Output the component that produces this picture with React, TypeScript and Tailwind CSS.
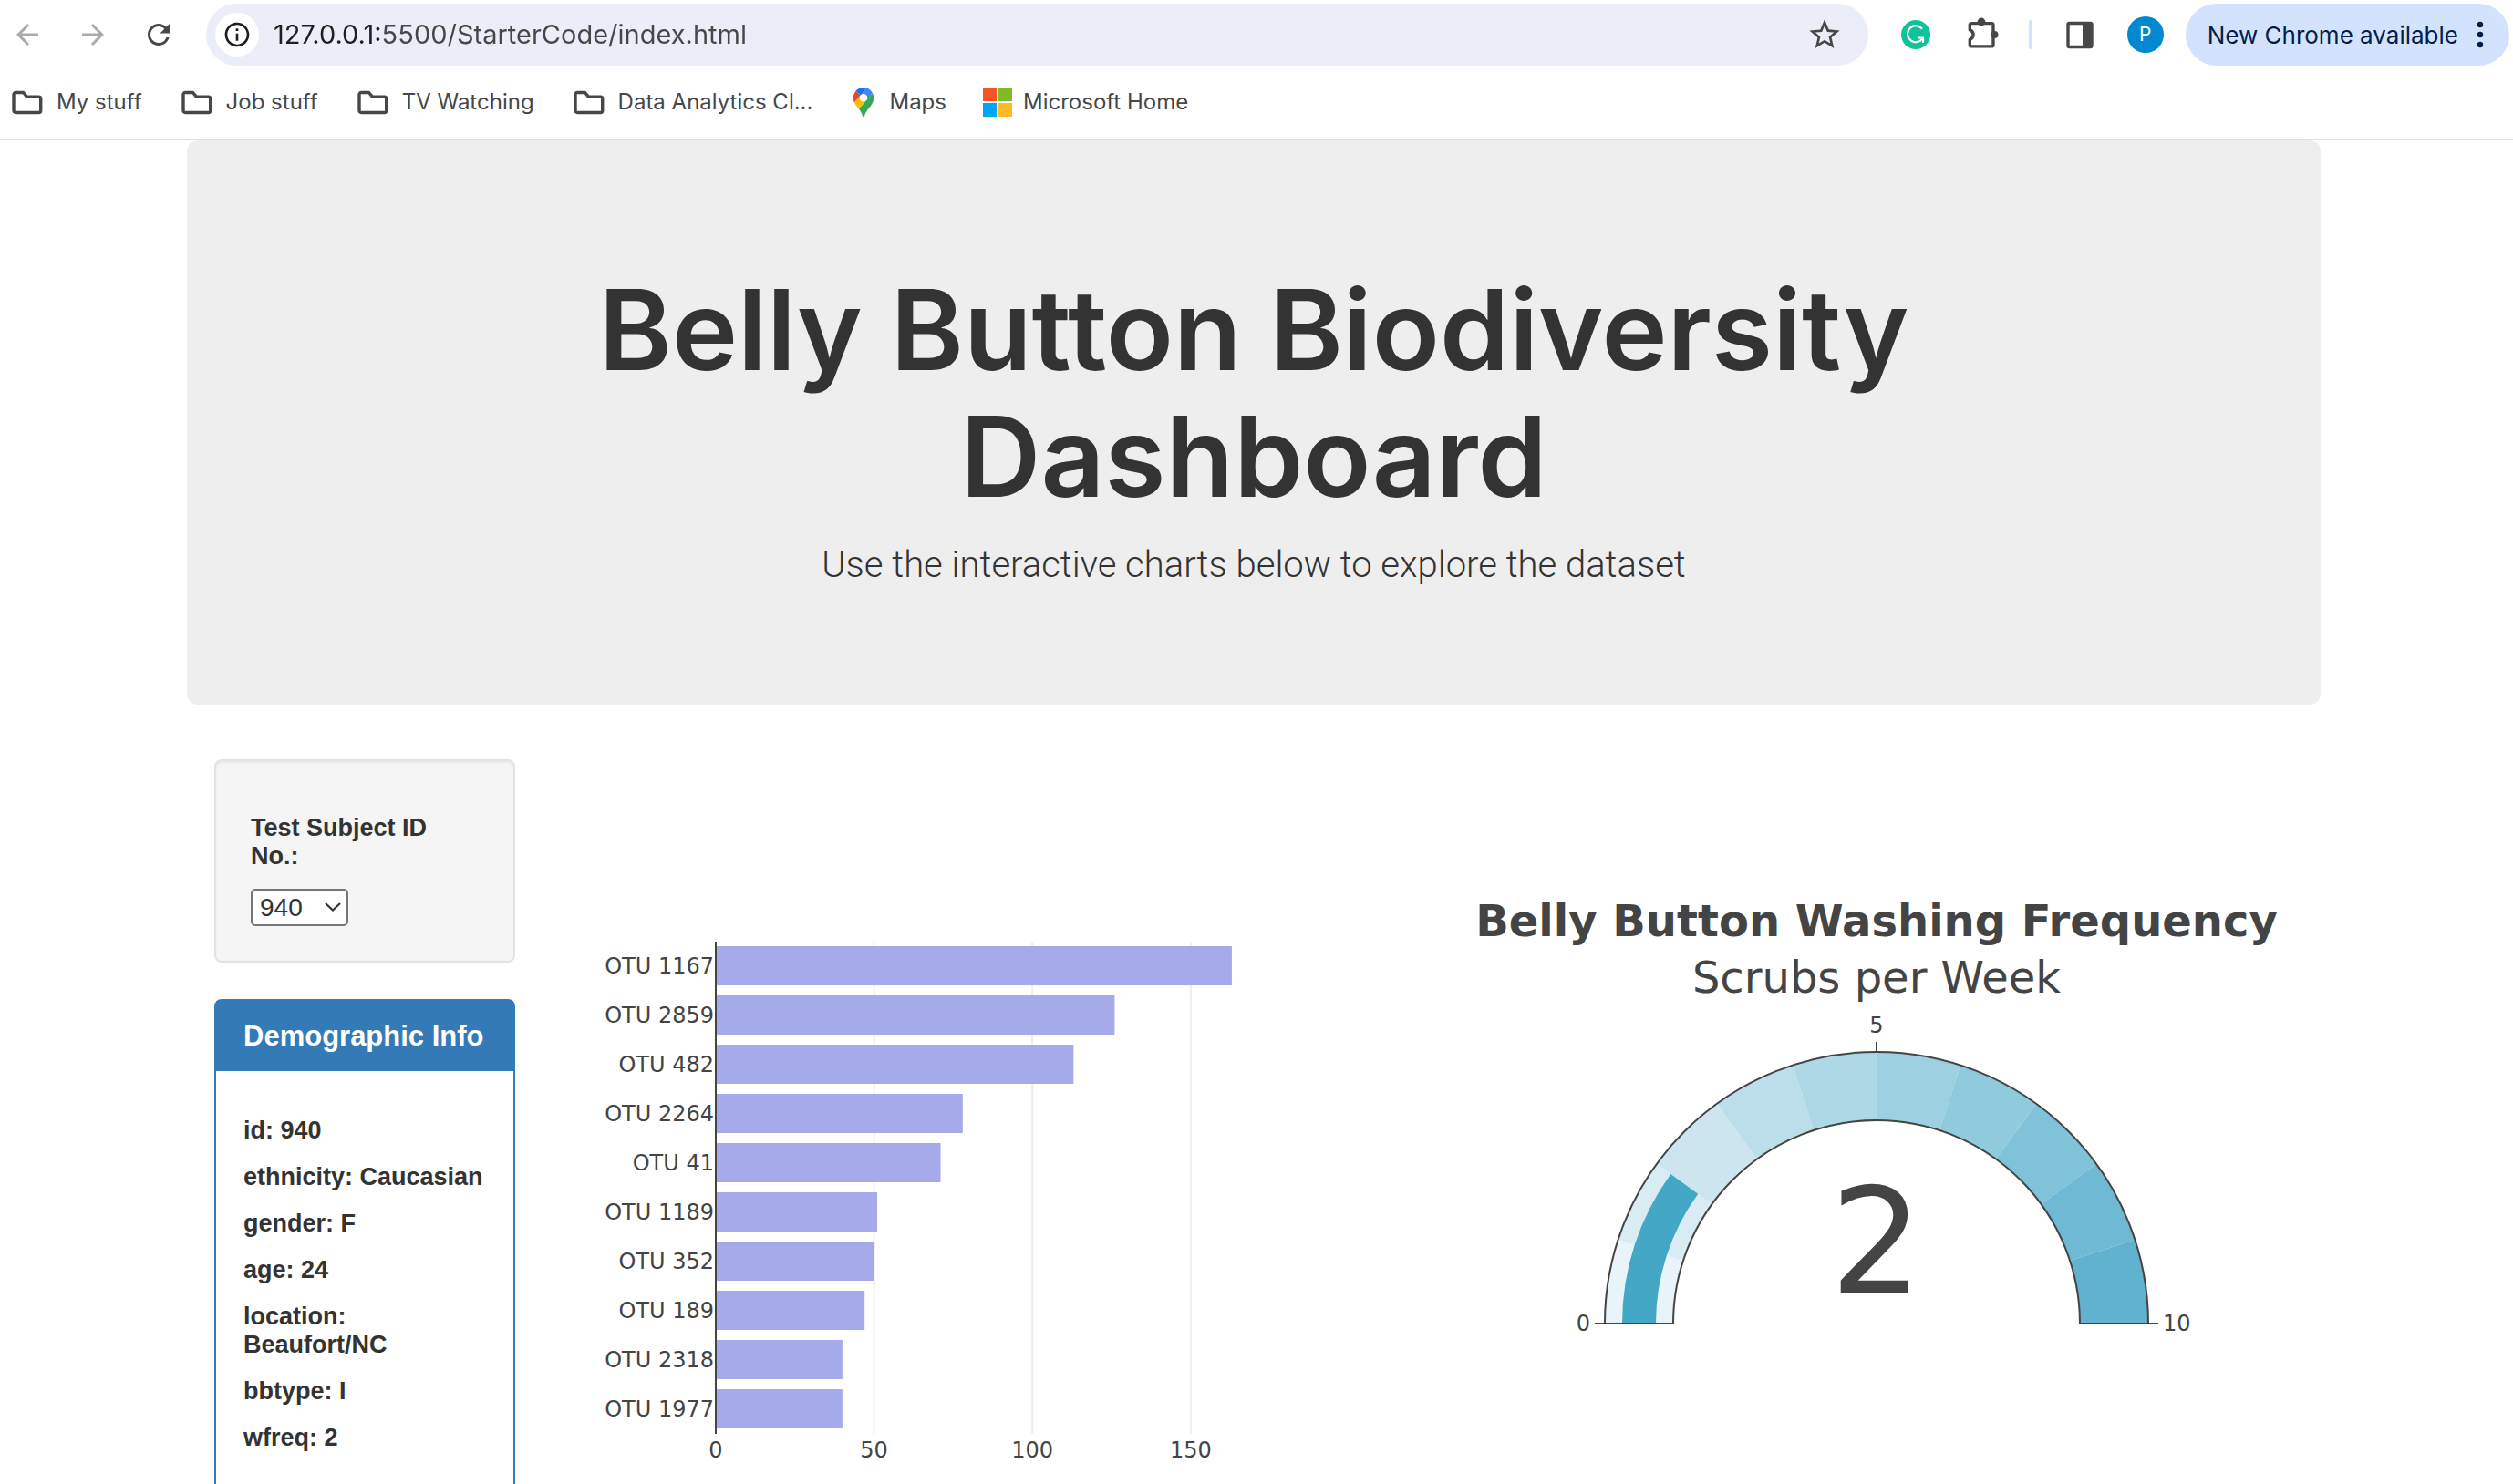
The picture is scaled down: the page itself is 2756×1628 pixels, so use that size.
import { useState } from "react";
import type { ReactNode } from "react";
import { MdArrowBack, MdArrowForward, MdInfoOutline, MdRefresh, MdStarBorder } from "react-icons/md";

const HOST_GRADIENT =
  "bg-[linear-gradient(to_right,#1f1f1f_121px,#474747_121px)] bg-clip-text text-transparent caret-black";

function FolderIcon() {
  return (
    <svg width="40" height="32" viewBox="0 0 40 32" fill="none" aria-hidden="true">
      <path
        d="M7.200 5.500h8.400l4 4.800H32.500a2.200 2.200 0 0 1 2.200 2.200v12.800a2.200 2.200 0 0 1-2.200 2.200H7.200A2.200 2.200 0 0 1 5 25.300V7.700A2.200 2.200 0 0 1 7.200 5.500z"
        stroke="#474747"
        strokeWidth="3.400"
        strokeLinejoin="round"
      />
    </svg>
  );
}

function MapsIcon() {
  return (
    <svg width="32" height="32" viewBox="-20 0 132.300 132.300" aria-hidden="true">
      <path fill="#1a73e8" d="M60.2 2.2C55.8.8 51 0 46.1 0 32 0 19.3 6.4 10.8 16.5l21.8 18.3L60.2 2.2z" />
      <path fill="#ea4335" d="M10.8 16.5C4.1 24.5 0 34.9 0 46.1c0 8.7 1.7 15.7 4.6 22l28-33.3-21.8-18.3z" />
      <path
        fill="#4285f4"
        d="M46.2 28.5c9.8 0 17.7 7.9 17.7 17.7 0 4.3-1.6 8.3-4.2 11.4 0 0 13.9-16.6 27.500-32.7-5.6-10.8-15.3-19-27-22.7L32.6 34.8c3.3-3.8 8.1-6.3 13.6-6.3"
      />
      <path
        fill="#fbbc04"
        d="M46.2 63.8c-9.8 0-17.7-7.9-17.7-17.7 0-4.3 1.500-8.3 4.1-11.3l-28 33.3c4.8 10.6 12.8 19.2 21 29.9l34.1-40.5c-3.3 3.9-8.1 6.3-13.5 6.3"
      />
      <path
        fill="#34a853"
        d="M59.1 109.2c15.4-24.1 33.3-35 33.3-63 0-7.7-1.9-14.9-5.2-21.3L25.6 98c2.6 3.4 5.3 7.3 7.9 11.3 9.4 14.5 6.8 23.1 12.8 23.1s3.4-8.7 12.8-23.2"
      />
    </svg>
  );
}

function MicrosoftIcon() {
  return (
    <svg width="32" height="32" viewBox="0 0 32 32" aria-hidden="true">
      <rect width="15" height="15" fill="#f65326" />
      <rect x="17" width="15" height="15" fill="#81bb24" />
      <rect y="17" width="15" height="15" fill="#00a6f0" />
      <rect x="17" y="17" width="15" height="15" fill="#ffba25" />
    </svg>
  );
}

function GrammarlyIcon() {
  return (
    <svg width="32" height="32" viewBox="0 0 32 32" fill="none" aria-hidden="true">
      <circle cx="16" cy="16" r="16" fill="#11c39a" />
      <path d="M23 9.600A9 9 0 1 0 21 22.700L24 19.800" stroke="#fff" strokeWidth="2.200" />
      <path d="M18.200 19.500H24V25" stroke="#fff" strokeWidth="2.200" />
    </svg>
  );
}

function PuzzleIcon() {
  return (
    <svg width="40" height="40" viewBox="0 0 40 40" aria-hidden="true">
      <path
        d="M7 7.600H29.300A1.700 1.700 0 0 1 31 9.300V31.200A1.700 1.700 0 0 1 29.300 32.900H7A1.700 1.700 0 0 1 5.300 31.200V25.400A5.600 5.600 0 0 0 5.300 14.800V9.300A1.700 1.700 0 0 1 7 7.600z"
        fill="none"
        stroke="#474747"
        strokeWidth="3.400"
        strokeLinejoin="round"
      />
      <circle cx="18" cy="6" r="4.400" fill="#474747" />
      <circle cx="32.500" cy="20" r="4" fill="#474747" />
    </svg>
  );
}

function SidePanelIcon() {
  return (
    <svg width="32" height="32" viewBox="0 0 32 32" aria-hidden="true">
      <rect x="3" y="3.500" width="26" height="26" rx="1.500" fill="#fff" stroke="#474747" strokeWidth="3.400" />
      <rect x="19" y="3" width="10" height="27" fill="#474747" />
    </svg>
  );
}

function Bookmark({ icon, children }: { icon: ReactNode; children: ReactNode }) {
  return (
    <a href="#" className="flex items-center gap-3 text-2xl text-[#474747]">
      {icon}
      {children}
    </a>
  );
}

function BrowserBar() {
  return (
    <header className="shrink-0 border-b-2 border-[#e0e0e0] bg-white font-[Inter,sans-serif]">
      <div className="flex items-center pt-1 pr-1 pl-3">
        <nav className="mr-[34px] flex items-center gap-9 text-4xl">
          <button aria-label="Back" className="text-[#ababab]"><MdArrowBack /></button>
          <button aria-label="Forward" className="text-[#ababab]"><MdArrowForward /></button>
          <button aria-label="Reload" className="text-[#474747]"><MdRefresh /></button>
        </nav>
        <div className="flex h-[68px] flex-1 items-center gap-4 rounded-full bg-[#ebeef8] pr-7 pl-2.5">
          <button aria-label="Site information" className="flex size-12 items-center justify-center rounded-full bg-white text-[#1f1f1f]">
            <MdInfoOutline className="size-8" />
          </button>
          <input
            aria-label="Address"
            defaultValue="127.0.0.1:5500/StarterCode/index.html"
            className={`min-w-0 flex-1 text-[29px] outline-none ${HOST_GRADIENT}`}
          />
          <button aria-label="Bookmark this page" className="text-[#474747]">
            <MdStarBorder className="size-10" />
          </button>
        </div>
        <button aria-label="Grammarly" className="ml-9"><GrammarlyIcon /></button>
        <button aria-label="Extensions" className="ml-[38px]"><PuzzleIcon /></button>
        <span className="ml-[30px] h-8 w-1 rounded-full bg-[#d3e3fd]" />
        <button aria-label="Side panel" className="ml-9"><SidePanelIcon /></button>
        <button aria-label="Profile" className="ml-9 flex size-10 items-center justify-center rounded-full bg-[#0288d1] text-[21px] text-white">
          P
        </button>
        <button className="ml-6 flex h-[68px] items-center gap-5 rounded-full bg-[#d3e3fd] pr-7 pl-6 text-[26px] text-[#041e49]">
          New Chrome available
          <svg width="8" height="30" viewBox="0 0 8 30" fill="#041e49" aria-hidden="true">
            <circle cx="4" cy="4" r="3.200" />
            <circle cx="4" cy="15" r="3.200" />
            <circle cx="4" cy="26" r="3.200" />
          </svg>
        </button>
      </div>
      <nav className="flex h-20 items-center gap-10 pl-2.5">
        <Bookmark icon={<FolderIcon />}>My stuff</Bookmark>
        <Bookmark icon={<FolderIcon />}>Job stuff</Bookmark>
        <Bookmark icon={<FolderIcon />}>TV Watching</Bookmark>
        <Bookmark icon={<FolderIcon />}>Data Analytics Cl...</Bookmark>
        <Bookmark icon={<MapsIcon />}>Maps</Bookmark>
        <Bookmark icon={<MicrosoftIcon />}>Microsoft Home</Bookmark>
      </nav>
    </header>
  );
}

const SAMPLES = [
  { label: "OTU 1167", value: 163 },
  { label: "OTU 2859", value: 126 },
  { label: "OTU 482", value: 113 },
  { label: "OTU 2264", value: 78 },
  { label: "OTU 41", value: 71 },
  { label: "OTU 1189", value: 51 },
  { label: "OTU 352", value: 50 },
  { label: "OTU 189", value: 47 },
  { label: "OTU 2318", value: 40 },
  { label: "OTU 1977", value: 40 },
];

function BarChart() {
  const left = 160;
  const top = 200;
  const rowHeight = 54;
  const bottom = top + rowHeight * SAMPLES.length;
  const x = (value: number) => left + value * 3.472;
  return (
    <svg viewBox="0 0 915 900" className="w-full" fill="#444" fontFamily='"DejaVu Sans", Verdana, sans-serif' fontSize="24" role="img" aria-label="Top ten OTUs">
      {[50, 100, 150].map((tick) => (
        <line key={tick} x1={x(tick)} x2={x(tick)} y1={top} y2={bottom} stroke="#eee" strokeWidth="2" />
      ))}
      <line x1={left} x2={left} y1={top} y2={bottom} stroke="#444" strokeWidth="2" />
      {SAMPLES.map((sample, i) => (
        <g key={sample.label}>
          <rect x={left + 1} y={top + rowHeight * i + 5} width={x(sample.value) - left - 1} height="43" fill="#a6aaeb" />
          <text x={left - 2} y={top + rowHeight * i + 35} textAnchor="end">{sample.label}</text>
        </g>
      ))}
      {[0, 50, 100, 150].map((tick) => (
        <text key={tick} x={x(tick)} y={bottom + 26} textAnchor="middle">{tick}</text>
      ))}
    </svg>
  );
}

const STEP_COLORS = [
  "#e8f4fa", "#d9ecf4", "#cce5ef", "#bcdeea", "#add8e6",
  "#9dd1e2", "#90cadd", "#80c2d7", "#70b9d5", "#60b2cf",
];

const CX = 458;
const CY = 619;

function arcSegment(from: number, to: number, outer: number, inner: number) {
  const point = (value: number, r: number) => {
    const angle = Math.PI * (1 - value / 10);
    return `${(CX + r * Math.cos(angle)).toFixed(2)} ${(CY - r * Math.sin(angle)).toFixed(2)}`;
  };
  return `M${point(from, outer)}A${outer} ${outer} 0 0 1 ${point(to, outer)}L${point(to, inner)}A${inner} ${inner} 0 0 0 ${point(from, inner)}z`;
}

function Gauge({ value }: { value: number }) {
  return (
    <svg viewBox="0 0 915 900" className="w-full" fill="#444" fontFamily='"DejaVu Sans", Verdana, sans-serif' fontSize="24" role="img" aria-label="Washing frequency">
      <text x={CX} y="194" textAnchor="middle" fontSize="48" fontWeight="700">Belly Button Washing Frequency</text>
      <text x={CX} y="256" textAnchor="middle" fontSize="48">Scrubs per Week</text>
      {STEP_COLORS.map((color, i) => (
        <path key={color} d={arcSegment(i, i + 1, 298, 223)} fill={color} />
      ))}
      <path d={arcSegment(0, value, 279, 242)} fill="#44a7c6" />
      <path d={arcSegment(0, 10, 298, 223)} fill="none" stroke="#444" strokeWidth="2" />
      <path d={`M${CX} 310V321M${CX - 309} ${CY}H${CX - 298}M${CX + 298} ${CY}H${CX + 309}`} stroke="#444" strokeWidth="2" />
      <text x={CX} y="300" textAnchor="middle">5</text>
      <text x={CX - 314} y="627" textAnchor="end">0</text>
      <text x={CX + 314} y="627">10</text>
      <text x={CX} y="585" textAnchor="middle" fontSize="160">{value}</text>
    </svg>
  );
}

const DEMOGRAPHICS = [
  ["id", "940"],
  ["ethnicity", "Caucasian"],
  ["gender", "F"],
  ["age", "24"],
  ["location", "Beaufort/NC"],
  ["bbtype", "I"],
  ["wfreq", "2"],
];

function Sidebar() {
  const [subject, setSubject] = useState("940");
  return (
    <aside className="col-span-2 flex flex-col gap-10 px-[30px] text-[27px] leading-[31px] font-bold">
      <div className="rounded-lg border-2 border-[#e3e3e3] bg-[#f5f5f5] p-[38px] shadow-[inset_0_2px_2px_rgba(0,0,0,0.05)]">
        <label htmlFor="subject" className="my-5 block">Test Subject ID No.:</label>
        <div className="relative w-[107px]">
          <select
            id="subject"
            value={subject}
            onChange={(e) => setSubject(e.target.value)}
            className="block h-[41px] w-full appearance-none rounded-[5px] border-2 border-[#767676] bg-white pl-2 text-[28px] font-normal"
          >
            <option>940</option>
            <option>941</option>
            <option>943</option>
          </select>
          <svg width="18" height="12" viewBox="0 0 18 12" fill="none" className="pointer-events-none absolute top-3.5 right-2" aria-hidden="true">
            <path d="M1 2l8 7.500L17 2" stroke="#333" strokeWidth="2.200" />
          </svg>
        </div>
      </div>
      <section className="rounded-lg border-2 border-[#337ab7] bg-white">
        <h3 className="bg-[#337ab7] px-[30px] py-5 text-[31px] leading-[37px] text-white">Demographic Info</h3>
        <div className="p-[30px]">
          {DEMOGRAPHICS.map(([key, value]) => (
            <h5 key={key} className="my-5">{key}: {value}</h5>
          ))}
        </div>
      </section>
    </aside>
  );
}

export default function App() {
  return (
    <div className="flex h-screen flex-col overflow-hidden bg-white">
      <BrowserBar />
      <main className="min-h-0 flex-1 overflow-hidden pr-1.5 font-['Liberation_Sans','Helvetica_Neue',sans-serif] text-[#333]">
        <div className="mx-auto max-w-[2340px]">
          <div className="mb-[60px] rounded-xl bg-[#eee] px-30 pt-[138px] pb-[123px] text-center">
            <h1 className="mx-auto max-w-[1600px] font-[Inter,sans-serif] text-[122px] leading-[139px] font-semibold">
              Belly Button Biodiversity Dashboard
            </h1>
            <p className="mt-5 font-[Roboto,sans-serif] text-[40px] leading-[60px] font-light">
              Use the interactive charts below to explore the dataset
            </p>
          </div>
          <div className="grid grid-cols-12">
            <Sidebar />
            <div className="col-span-5 px-[30px]"><BarChart /></div>
            <div className="col-span-5 px-[30px]"><Gauge value={2} /></div>
          </div>
        </div>
      </main>
    </div>
  );
}
